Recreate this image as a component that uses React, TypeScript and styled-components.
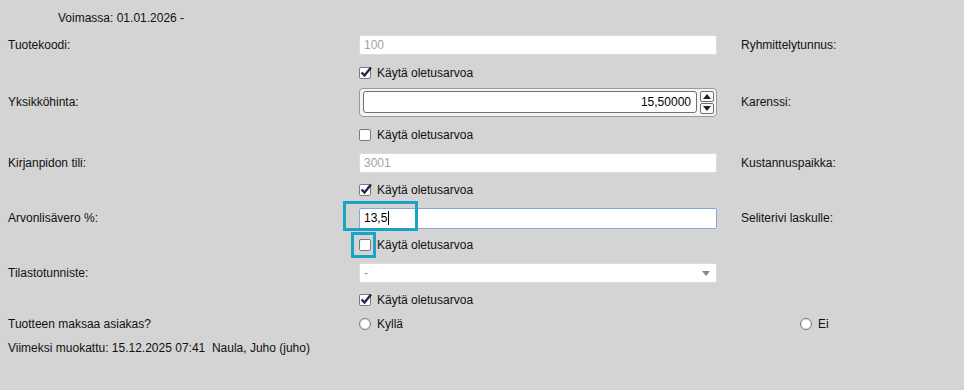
import { createGlobalStyle, styled } from "styled-components"

const GlobalStyle = createGlobalStyle`
  html, body {
    margin: 0;
    padding: 0;
    background: #d4d4d4;
  }
  body {
    font-family: "Liberation Sans", Arial, sans-serif;
    font-size: 12px;
    color: #111;
  }
`

const Page = styled.div`
  position: relative;
  width: 964px;
  height: 390px;
  background: #d4d4d4;
  box-sizing: border-box;
  padding-left: 8px;
`

const Form = styled.div`
  display: grid;
  grid-template-columns: 350px 360px 1fr;
  grid-template-rows: 31px 28px 27px 32px 34px 22px 32px 24px 30px 26px 28px 20px 28px;
  align-items: center;
`

const Header = styled.div`
  grid-column: 1 / -1;
  padding-left: 50px;
  padding-top: 4px;
`

const Label = styled.div<{ $right?: boolean }>`
  grid-column: ${(p) => (p.$right ? 3 : 1)};
  padding-left: ${(p) => (p.$right ? "23px" : "0")};
  white-space: nowrap;
`

const TextInput = styled.div<{ $muted?: boolean; $focused?: boolean }>`
  grid-column: 2;
  box-sizing: border-box;
  height: ${(p) => (p.$focused ? "21px" : "20px")};
  width: 358px;
  margin-left: 1px;
  background: #fff;
  border: 1px solid ${(p) => (p.$focused ? "#86a7d6" : "#dcdcdc")};
  border-radius: 2px;
  padding: 0 4px;
  display: flex;
  align-items: center;
  color: ${(p) => (p.$muted ? "#a3a3a3" : "#000")};
`

const Caret = styled.span`
  display: inline-block;
  width: 1px;
  height: 14px;
  background: #000;
  margin-left: 1px;
`

const SpinBox = styled.div`
  grid-column: 2;
  box-sizing: border-box;
  width: 358px;
  height: 29px;
  margin-left: 1px;
  border: 1px solid #9a9a9a;
  border-radius: 4px;
  background: #f4f4f4;
  display: flex;
  align-items: center;
  gap: 3px;
  padding: 0 2px 0 3px;
`

const SpinField = styled.div`
  box-sizing: border-box;
  flex: 1;
  height: 22px;
  background: #fff;
  border: 1px solid #707070;
  border-radius: 3px;
  display: flex;
  align-items: center;
  justify-content: flex-end;
  padding-right: 5px;
  color: #000;
`

const SpinButtons = styled.div`
  display: flex;
  flex-direction: column;
  gap: 1px;
`

const SpinButton = styled.div`
  box-sizing: border-box;
  width: 14px;
  height: 11px;
  border: 1px solid #6e6e6e;
  border-radius: 2px;
  background: #fafafa;
  display: flex;
  align-items: center;
  justify-content: center;
`

const SelectBox = styled(TextInput)`
  justify-content: space-between;
  color: #d07a2a;
  padding-right: 6px;
`

const CheckRow = styled.label`
  grid-column: 2;
  display: flex;
  align-items: center;
  gap: 6px;
  padding-left: 1px;
`

const Box = styled.span`
  box-sizing: border-box;
  width: 12px;
  height: 12px;
  border: 1px solid #7a7a7a;
  border-radius: 2px;
  background: #fff;
  display: inline-flex;
  align-items: center;
  justify-content: center;
  position: relative;
`

const Radio = styled.label<{ $col: number; $offset?: number }>`
  grid-column: ${(p) => p.$col};
  display: flex;
  align-items: center;
  gap: 6px;
  padding-left: ${(p) => p.$offset ?? 1}px;
`

const Circle = styled.span`
  box-sizing: border-box;
  width: 12px;
  height: 12px;
  border: 1px solid #7a7a7a;
  border-radius: 50%;
  background: #fff;
  box-shadow: inset 0 0 0 1px #e6e6e6;
`

const Footer = styled.div`
  grid-column: 1 / -1;
  white-space: pre;
`

const Highlight = styled.div`
  position: absolute;
  box-sizing: border-box;
  border: 3px solid #1ba3c6;
`

const Check = () => (
  <svg width="14" height="14" viewBox="0 0 14 14" style={{ position: "absolute", left: -1, top: -3 }}>
    <path d="M2.5 7.5 L5.5 10.5 L12 2.5" fill="none" stroke="#1c2a4a" strokeWidth="2.4" />
  </svg>
)

const CheckField = ({ checked }: { checked: boolean }) => (
  <CheckRow>
    <Box>{checked && <Check />}</Box>
    Käytä oletusarvoa
  </CheckRow>
)

const Arrow = ({ up }: { up?: boolean }) => (
  <svg width="8" height="5" viewBox="0 0 8 5">
    <path d={up ? "M0 5 L4 0 L8 5 Z" : "M0 0 L4 5 L8 0 Z"} fill="#222" />
  </svg>
)

export default function App() {
  return (
    <Page>
      <GlobalStyle />
      <Form>
        <Header>Voimassa: 01.01.2026 -</Header>

        <Label>Tuotekoodi:</Label>
        <TextInput $muted>100</TextInput>
        <Label $right>Ryhmittelytunnus:</Label>
        <CheckField checked />

        <Label>Yksikköhinta:</Label>
        <SpinBox>
          <SpinField>15,50000</SpinField>
          <SpinButtons>
            <SpinButton>
              <Arrow up />
            </SpinButton>
            <SpinButton>
              <Arrow />
            </SpinButton>
          </SpinButtons>
        </SpinBox>
        <Label $right>Karenssi:</Label>
        <CheckField checked={false} />

        <Label>Kirjanpidon tili:</Label>
        <TextInput $muted>3001</TextInput>
        <Label $right>Kustannuspaikka:</Label>
        <CheckField checked />

        <Label>Arvonlisävero %:</Label>
        <TextInput $focused>
          13,5
          <Caret />
        </TextInput>
        <Label $right>Seliterivi laskulle:</Label>
        <CheckField checked={false} />

        <Label>Tilastotunniste:</Label>
        <SelectBox>
          -
          <svg width="8" height="5" viewBox="0 0 8 5">
            <path d="M0 0 L4 5 L8 0 Z" fill="#888" />
          </svg>
        </SelectBox>
        <CheckField checked />

        <Label>Tuotteen maksaa asiakas?</Label>
        <Radio $col={2}>
          <Circle />
          Kyllä
        </Radio>
        <Radio $col={3} $offset={82}>
          <Circle />
          Ei
        </Radio>

        <Footer>Viimeksi muokattu: 15.12.2025 07:41  Naula, Juho (juho)</Footer>
      </Form>
      <Highlight style={{ left: 343, top: 201, width: 75, height: 30 }} />
      <Highlight style={{ left: 351, top: 232, width: 25, height: 26 }} />
    </Page>
  )
}
